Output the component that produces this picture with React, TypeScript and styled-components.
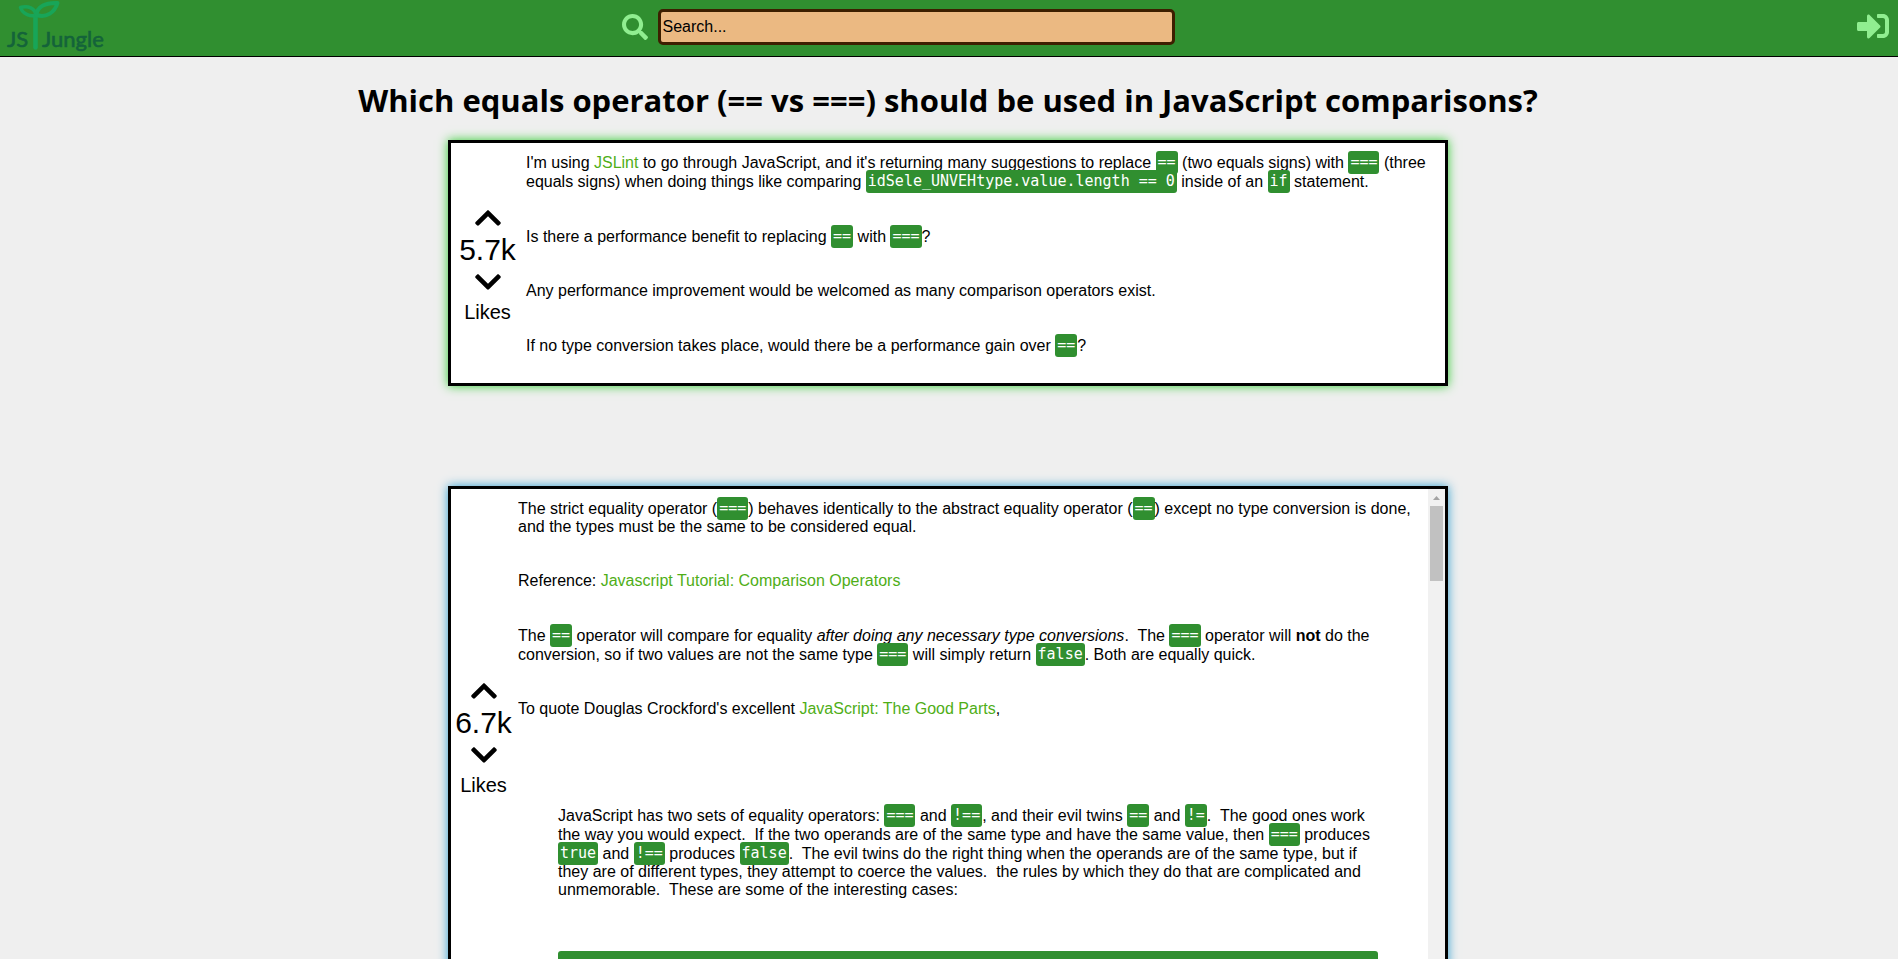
import React, { useId } from "react";
import styled, { createGlobalStyle } from "styled-components";
import { FaChevronDown, FaChevronUp, FaSearch, FaSignInAlt } from "react-icons/fa";

const GlobalStyle = createGlobalStyle`
  html { scrollbar-width: none; }
  body {
    margin: 0;
    background: #efefef;
    color: #000;
    font-family: Arial, "Liberation Sans", sans-serif;
    font-size: 16px;
  }
`;

const Header = styled.header`
  display: grid;
  grid-template-columns: 1fr auto 1fr;
  align-items: center;
  height: 56px;
  background: #308f30;
  border-bottom: 1px solid #000;
`;

const LogoLink = styled.a`
  display: block;
  height: 56px;
  justify-self: start;
`;

const SearchForm = styled.form`
  display: flex;
  align-items: center;
  gap: 10px;
  padding: 0 102px 2px 0;
`;

const IconButton = styled.button`
  display: flex;
  padding: 0;
  border: 0;
  background: none;
  color: #90ee90;
  cursor: pointer;
`;

const LoginButton = styled(IconButton)`
  justify-self: end;
  margin: 0 9px 4px 0;
`;

const SearchInput = styled.input`
  box-sizing: border-box;
  width: 517px;
  height: 36px;
  padding: 0 2px;
  border: 3px solid #3d1f00;
  border-radius: 5px;
  background: #ebb982;
  font: inherit;

  &::placeholder {
    color: #000;
    opacity: 1;
  }
`;

const Main = styled.main`
  display: flex;
  flex-direction: column;
  align-items: center;
  padding: 22px 2px 40px 0;
`;

const Title = styled.h1`
  margin: 0 0 18px;
  font-family: "Segoe UI", "Open Sans", "Noto Sans", sans-serif;
  font-size: 31px;
  font-weight: 700;
  line-height: 43px;
`;

const Card = styled.article<{ $glow: string }>`
  display: flex;
  box-sizing: border-box;
  width: 1000px;
  max-width: 100%;
  background: #fff;
  border: 3px solid #000;
  box-shadow: 0 0 10px ${(p) => p.$glow};
`;

const QuestionCard = styled(Card)`
  gap: 10px;
  padding: 0 8px;
`;

const AnswerCard = styled(Card)`
  gap: 6px;
  height: 500px;
  margin-top: 100px;
  padding-left: 4px;
`;

const VoteColumn = styled.aside`
  display: flex;
  flex: none;
  flex-direction: column;
  align-items: center;
  justify-content: center;
  width: 57px;
`;

const VoteButton = styled(IconButton)`
  color: #000;
`;

const VoteCount = styled.span`
  font-size: 30px;
  line-height: 34px;
`;

const VoteLabel = styled.span`
  margin-top: 4px;
  font-size: 20px;
  line-height: 23px;
`;

const PostBody = styled.div`
  flex: 1;
  min-width: 0;
  padding: 10px 0 28px;
`;

const AnswerBody = styled(PostBody)`
  margin-right: -6px;
  padding-right: 10px;
  overflow-y: auto;
  scrollbar-width: none;
`;

const Paragraph = styled.p`
  margin: 0 0 36px;

  &:last-child { margin-bottom: 0; }
`;

const Quote = styled.blockquote`
  margin: 88px 40px 0;
`;

const Code = styled.code`
  padding: 2px 2px 3px;
  border-radius: 3px;
  background: #308f30;
  color: #fff;
  font-family: Consolas, "DejaVu Sans Mono", monospace;
  font-size: 15px;
  line-height: 19px;
  vertical-align: 1px;
`;

const CodeBlock = styled.pre`
  height: 240px;
  margin: 52px 0 0;
  border-radius: 3px;
  background: #308f30;
`;

const PostLink = styled.a`
  color: #4fae17;
  text-decoration: none;
`;

const ScrollTrack = styled.div`
  display: flex;
  flex: none;
  flex-direction: column;
  align-items: center;
  width: 17px;
  background: #f1f1f1;
`;

const ScrollArrow = styled.svg`
  flex: none;
  width: 17px;
  height: 17px;
`;

const ScrollThumb = styled.div`
  width: 13px;
  height: 75px;
  background: #c1c1c1;
`;

function Logo() {
  return (
    <svg width="112" height="56" viewBox="0 0 112 56" role="img" aria-label="JS Jungle">
      <g
        fontFamily="Lato, 'Liberation Sans', sans-serif"
        fontSize="22"
        fill="#14633a"
        stroke="#14633a"
        strokeWidth="0.6"
      >
        <text x="7" y="47">JS</text>
        <text x="42" y="47">Jungle</text>
      </g>
      <g fill="none" stroke="#18a558" strokeLinecap="round" strokeLinejoin="round">
        <path d="M35.500 47.500V16" strokeWidth="4.600" />
        <path d="M36 15C31 17 23 14.500 20.500 7.500C28 5.500 35 8 36 15Z" strokeWidth="3.600" />
        <path d="M36.500 15C37 7 45 2.500 57.500 3C54.500 13 46 18 36.500 15Z" strokeWidth="4" />
      </g>
    </svg>
  );
}

function Votes({ count }: { count: string }) {
  return (
    <VoteColumn>
      <VoteButton type="button" aria-label="Vote up"><FaChevronUp size={30} /></VoteButton>
      <VoteCount>{count}</VoteCount>
      <VoteButton type="button" aria-label="Vote down"><FaChevronDown size={30} /></VoteButton>
      <VoteLabel>Likes</VoteLabel>
    </VoteColumn>
  );
}

export default function App() {
  const searchId = useId();
  return (
    <>
      <GlobalStyle />
      <Header>
        <LogoLink href="#home"><Logo /></LogoLink>
        <SearchForm role="search" onSubmit={(e) => e.preventDefault()}>
          <IconButton as="label" htmlFor={searchId} aria-label="Search">
            <FaSearch size={26} />
          </IconButton>
          <SearchInput id={searchId} type="text" placeholder="Search..." />
        </SearchForm>
        <LoginButton type="button" aria-label="Log in"><FaSignInAlt size={32} /></LoginButton>
      </Header>
      <Main>
        <Title>Which equals operator (== vs ===) should be used in JavaScript comparisons?</Title>
        <QuestionCard $glow="#32cd32">
          <Votes count="5.7k" />
          <PostBody>
            <Paragraph>
              I'm using <PostLink href="#jslint">JSLint</PostLink> to go through JavaScript, and it's
              returning many suggestions to replace <Code>==</Code> (two equals signs) with{" "}
              <Code>===</Code> (three equals signs) when doing things like comparing{" "}
              <Code>idSele_UNVEHtype.value.length == 0</Code> inside of an <Code>if</Code> statement.
            </Paragraph>
            <Paragraph>
              Is there a performance benefit to replacing <Code>==</Code> with <Code>===</Code>?
            </Paragraph>
            <Paragraph>
              Any performance improvement would be welcomed as many comparison operators exist.
            </Paragraph>
            <Paragraph>
              If no type conversion takes place, would there be a performance gain over{" "}
              <Code>==</Code>?
            </Paragraph>
          </PostBody>
        </QuestionCard>
        <AnswerCard $glow="#2f9fd0">
          <Votes count="6.7k" />
          <AnswerBody>
            <Paragraph>
              The strict equality operator (<Code>===</Code>) behaves identically to the abstract
              equality operator (<Code>==</Code>) except no type conversion is done, and the types
              must be the same to be considered equal.
            </Paragraph>
            <Paragraph>
              Reference:{" "}
              <PostLink href="#tutorial">Javascript Tutorial: Comparison Operators</PostLink>
            </Paragraph>
            <Paragraph>
              The <Code>==</Code> operator will compare for equality{" "}
              <em>after doing any necessary type conversions</em>.&nbsp; The <Code>===</Code> operator
              will <b>not</b> do the conversion, so if two values are not the same type{" "}
              <Code>===</Code> will simply return <Code>false</Code>. Both are equally quick.
            </Paragraph>
            <Paragraph>
              To quote Douglas Crockford's excellent{" "}
              <PostLink href="#good-parts">JavaScript: The Good Parts</PostLink>,
            </Paragraph>
            <Quote>
              <Paragraph>
                JavaScript has two sets of equality operators: <Code>===</Code> and{" "}
                <Code>!==</Code>, and their evil twins <Code>==</Code> and <Code>!=</Code>.&nbsp; The
                good ones work the way you would expect.&nbsp; If the two operands are of the same
                type and have the same value, then <Code>===</Code> produces <Code>true</Code> and{" "}
                <Code>!==</Code> produces <Code>false</Code>.&nbsp; The evil twins do the right thing
                when the operands are of the same type, but if they are of different types, they
                attempt to coerce the values.&nbsp; the rules by which they do that are complicated
                and unmemorable.&nbsp; These are some of the interesting cases:
              </Paragraph>
              <CodeBlock />
            </Quote>
          </AnswerBody>
          <ScrollTrack aria-hidden="true">
            <ScrollArrow viewBox="0 0 17 17">
              <path d="M5 11h7L8.500 7Z" fill="#a3a3a3" />
            </ScrollArrow>
            <ScrollThumb />
          </ScrollTrack>
        </AnswerCard>
      </Main>
    </>
  );
}
